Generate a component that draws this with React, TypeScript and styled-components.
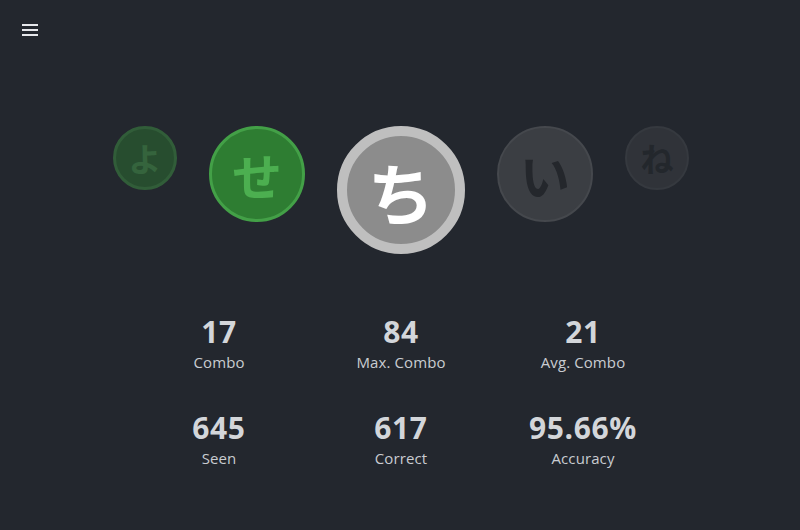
import styled, { createGlobalStyle } from 'styled-components';

const GlobalStyle = createGlobalStyle`
  html, body {
    margin: 0;
    padding: 0;
    background: #23272e;
  }
  body {
    font-family: "Open Sans", "Noto Sans", sans-serif;
    color: #d4d7db;
  }
`;

const Page = styled.div`
  width: 800px;
  height: 530px;
  display: flex;
  flex-direction: column;
  background: #23272e;
  overflow: hidden;
`;

const TopBar = styled.header`
  height: 60px;
  display: flex;
  align-items: flex-start;
  padding: 20px 0 0 18px;
  box-sizing: border-box;
`;

const MenuButton = styled.button`
  width: 24px;
  height: 20px;
  padding: 0;
  border: none;
  background: transparent;
  cursor: pointer;
  display: flex;
  align-items: center;
  justify-content: center;
`;

const Track = styled.div`
  margin-top: 66px;
  display: flex;
  justify-content: center;
  align-items: flex-start;
  gap: 32px;
  padding-left: 2px;
`;

type Tone = 'green' | 'current' | 'grey';

const tones = {
  green: { fill: '#2e7d32', border: '#43a047', text: '#4caf50' },
  current: { fill: '#8c8c8c', border: '#bfbfbf', text: '#ffffff' },
  grey: { fill: '#3b3e43', border: '#45484d', text: '#24272c' },
};

const Bubble = styled.div<{ $size: number; $ring: number; $tone: Tone; $fade: number }>`
  width: ${p => p.$size}px;
  height: ${p => p.$size}px;
  box-sizing: border-box;
  border-radius: 50%;
  border: ${p => p.$ring}px solid ${p => tones[p.$tone].border};
  background: ${p => tones[p.$tone].fill};
  color: ${p => tones[p.$tone].text};
  opacity: ${p => p.$fade};
  display: flex;
  align-items: center;
  justify-content: center;
  font-family: "Noto Sans CJK JP", sans-serif;
  font-weight: 700;
  font-size: ${p => Math.round(p.$size * 0.52)}px;
  line-height: 1;
  flex-shrink: 0;
`;

const Stats = styled.section`
  margin-top: 62px;
  display: grid;
  grid-template-columns: repeat(3, 182px);
  row-gap: 40px;
  justify-content: center;
  padding-left: 2px;
`;

const Stat = styled.div`
  display: flex;
  flex-direction: column;
  align-items: center;
`;

const Value = styled.div`
  font-size: 30px;
  font-weight: 700;
  letter-spacing: 0.6px;
  line-height: 32px;
  color: #d3d6da;
`;

const Label = styled.div`
  margin-top: 4px;
  font-size: 15px;
  letter-spacing: 0.1px;
  line-height: 20px;
  color: #c9ccd1;
`;

const kana = [
  { ch: 'よ', size: 64, ring: 3, tone: 'green' as Tone, fade: 0.45 },
  { ch: 'せ', size: 96, ring: 3, tone: 'green' as Tone, fade: 1 },
  { ch: 'ち', size: 128, ring: 10, tone: 'current' as Tone, fade: 1 },
  { ch: 'い', size: 96, ring: 2, tone: 'grey' as Tone, fade: 1 },
  { ch: 'ね', size: 64, ring: 2, tone: 'grey' as Tone, fade: 0.55 },
];

const stats = [
  { value: '17', label: 'Combo' },
  { value: '84', label: 'Max. Combo' },
  { value: '21', label: 'Avg. Combo' },
  { value: '645', label: 'Seen' },
  { value: '617', label: 'Correct' },
  { value: '95.66%', label: 'Accuracy' },
];

export default function App() {
  return (
    <Page>
      <GlobalStyle />
      <TopBar>
        <MenuButton aria-label="Menu">
          <svg width="16" height="12" viewBox="0 0 16 12">
            <rect x="0" y="0" width="16" height="2" fill="#e6e8eb" />
            <rect x="0" y="5" width="16" height="2" fill="#e6e8eb" />
            <rect x="0" y="10" width="16" height="2" fill="#e6e8eb" />
          </svg>
        </MenuButton>
      </TopBar>

      <Track>
        {kana.map(k => (
          <Bubble key={k.ch} $size={k.size} $ring={k.ring} $tone={k.tone} $fade={k.fade}>
            {k.ch}
          </Bubble>
        ))}
      </Track>

      <Stats>
        {stats.map(s => (
          <Stat key={s.label}>
            <Value>{s.value}</Value>
            <Label>{s.label}</Label>
          </Stat>
        ))}
      </Stats>
    </Page>
  );
}
